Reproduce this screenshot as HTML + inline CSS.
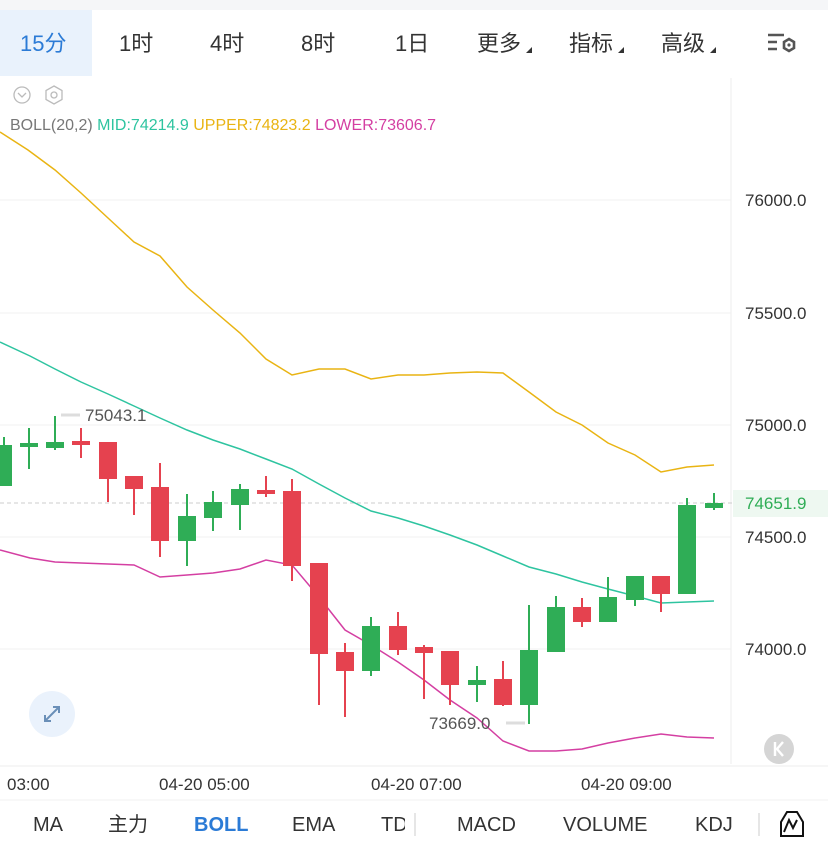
<!DOCTYPE html>
<html><head><meta charset="utf-8"><style>
body{margin:0;width:828px;height:850px;overflow:hidden;background:#fff;font-family:"Liberation Sans","Noto Sans CJK SC",sans-serif;position:relative}
div{line-height:1}
.t{position:absolute;white-space:nowrap}
.tab{position:absolute;top:32px;font-size:22px;color:#333;line-height:24px;height:24px}
.bt{position:absolute;top:814px;font-size:20px;color:#333;line-height:22px;height:22px}
.ax{position:absolute;left:745px;font-size:17px;color:#333}
</style></head><body>
<div style="position:absolute;left:0;top:0;width:828px;height:10px;background:#f5f6f8"></div>
<div style="position:absolute;left:0;top:10px;width:92px;height:66px;background:#e9f2fc"></div>
<div class="tab" style="left:20px;color:#2b7bd6">15分</div>
<div class="tab" style="left:119px">1时</div>
<div class="tab" style="left:210px">4时</div>
<div class="tab" style="left:301px">8时</div>
<div class="tab" style="left:395px">1日</div>
<div class="tab" style="left:477px">更多</div>
<div class="tab" style="left:569px">指标</div>
<div class="tab" style="left:661px">高级</div>
<svg style="position:absolute;left:0;top:0" width="828" height="850">
<g fill="#333"><path d="M526 53l6-6v6z"/><path d="M618 53l6-6v6z"/><path d="M710 53l6-6v6z"/></g>
<g stroke="#555" stroke-width="2.6" fill="none"><path d="M768 35h16M768 42h9M768 49h9"/><path d="M789 39l5 3v6l-5 3-5-3v-6z"/></g>
<circle cx="789" cy="45" r="1.6" fill="#555"/>
<line x1="731" y1="78" x2="731" y2="764" stroke="#eee"/>
<circle cx="22" cy="95" r="8" fill="none" stroke="#bbb" stroke-width="1.3"/><path d="M18 93l4 4 4-4" stroke="#bbb" fill="none" stroke-width="1.3"/>
<path d="M54 86l8 4.5v9l-8 4.5-8-4.5v-9z" fill="none" stroke="#bbb" stroke-width="1.3"/><circle cx="54" cy="95" r="3" fill="none" stroke="#bbb" stroke-width="1.3"/>
<g stroke="#f0f0f0"><line x1="0" y1="200" x2="731" y2="200"/><line x1="0" y1="313" x2="731" y2="313"/><line x1="0" y1="425" x2="731" y2="425"/><line x1="0" y1="537" x2="731" y2="537"/><line x1="0" y1="649" x2="731" y2="649"/></g>
<line x1="0" y1="503" x2="828" y2="503" stroke="#ccc" stroke-dasharray="4,3"/>
<rect x="733" y="490" width="95" height="27" fill="#eef8f1"/>
<polyline fill="none" stroke="#e9b413" stroke-width="1.5" points="0,132 28,150 55,170 81,193 108,218 134,242 160,256 187,287 213,310 240,333 266,359 292,375 319,369 345,369 371,379 398,375 424,375 450,373 477,372 503,373 529,392 556,412 582,425 608,443 635,455 661,472 687,467 714,465"/>
<polyline fill="none" stroke="#2ec4a0" stroke-width="1.5" points="0,342 30,356 55,369 81,382 108,394 134,406 160,418 187,430 213,440 240,449 266,459 292,469 319,484 345,498 371,511 398,518 424,526 450,535 477,545 503,556 529,567 556,574 582,582 608,589 635,596 661,603 687,602 714,601"/>
<polyline fill="none" stroke="#d43fa2" stroke-width="1.5" points="0,550 30,558 55,562 81,563 108,564 134,565 160,577 187,575 213,573 240,569 266,560 292,565 319,597 345,630 371,645 398,662 424,680 450,700 477,718 503,741 529,751 556,751 582,749 608,743 635,738 661,734 687,737 714,738"/>
<g stroke-width="2">
<g fill="#2fad56" stroke="#2fad56">
<line x1="4" y1="437" x2="4" y2="485"/><rect x="0" y="446" width="11" height="39"/>
<line x1="29" y1="428" x2="29" y2="469"/><rect x="21" y="444" width="16" height="2"/>
<line x1="55" y1="416" x2="55" y2="450"/><rect x="47" y="443" width="16" height="4"/>
<line x1="187" y1="494" x2="187" y2="566"/><rect x="179" y="517" width="16" height="23"/>
<line x1="213" y1="491" x2="213" y2="531"/><rect x="205" y="503" width="16" height="14"/>
<line x1="240" y1="484" x2="240" y2="530"/><rect x="232" y="490" width="16" height="14"/>
<line x1="371" y1="617" x2="371" y2="676"/><rect x="363" y="627" width="16" height="43"/>
<line x1="477" y1="666" x2="477" y2="702"/><rect x="469" y="681" width="16" height="3"/>
<line x1="529" y1="605" x2="529" y2="724"/><rect x="521" y="651" width="16" height="53"/>
<line x1="556" y1="596" x2="556" y2="651"/><rect x="548" y="608" width="16" height="43"/>
<line x1="608" y1="577" x2="608" y2="622"/><rect x="600" y="598" width="16" height="23"/>
<line x1="635" y1="577" x2="635" y2="606"/><rect x="627" y="577" width="16" height="22"/>
<line x1="687" y1="498" x2="687" y2="593"/><rect x="679" y="506" width="16" height="87"/>
<line x1="714" y1="493" x2="714" y2="510"/><rect x="706" y="504" width="16" height="3"/>
</g>
<g fill="#e5424f" stroke="#e5424f">
<line x1="81" y1="428" x2="81" y2="458"/><rect x="73" y="442" width="16" height="2"/>
<line x1="108" y1="443" x2="108" y2="502"/><rect x="100" y="443" width="16" height="35"/>
<line x1="134" y1="477" x2="134" y2="515"/><rect x="126" y="477" width="16" height="11"/>
<line x1="160" y1="463" x2="160" y2="557"/><rect x="152" y="488" width="16" height="52"/>
<line x1="266" y1="476" x2="266" y2="497"/><rect x="258" y="491" width="16" height="2"/>
<line x1="292" y1="479" x2="292" y2="581"/><rect x="284" y="492" width="16" height="73"/>
<line x1="319" y1="564" x2="319" y2="705"/><rect x="311" y="564" width="16" height="89"/>
<line x1="345" y1="643" x2="345" y2="717"/><rect x="337" y="653" width="16" height="17"/>
<line x1="398" y1="612" x2="398" y2="655"/><rect x="390" y="627" width="16" height="22"/>
<line x1="424" y1="645" x2="424" y2="699"/><rect x="416" y="648" width="16" height="4"/>
<line x1="450" y1="652" x2="450" y2="705"/><rect x="442" y="652" width="16" height="32"/>
<line x1="503" y1="661" x2="503" y2="706"/><rect x="495" y="680" width="16" height="24"/>
<line x1="582" y1="598" x2="582" y2="627"/><rect x="574" y="608" width="16" height="13"/>
<line x1="661" y1="576" x2="661" y2="612"/><rect x="653" y="577" width="16" height="16"/>
</g></g>
<line x1="61" y1="415" x2="80" y2="415" stroke="#ddd" stroke-width="3"/>
<line x1="506" y1="723" x2="525" y2="723" stroke="#ddd" stroke-width="3"/>
<circle cx="52" cy="714" r="23" fill="#eaf2fc"/>
<g stroke="#6a8fb8" stroke-width="2" fill="none"><path d="M45 721l14-14M53 707h6v6M45 715v6h6"/></g>
<circle cx="779" cy="749" r="15" fill="#d5d5d5"/><path d="M775 742v14M783 742l-6 7 6 7" stroke="#fff" stroke-width="2.4" fill="none"/>
<line x1="0" y1="766" x2="828" y2="766" stroke="#eee"/>
<line x1="0" y1="800" x2="828" y2="800" stroke="#f2f2f2"/>
<line x1="415" y1="813" x2="415" y2="836" stroke="#ccc"/>
<line x1="759" y1="813" x2="759" y2="836" stroke="#ccc"/>
<path d="M787 812l-6 10v14h22v-14l-6-10z M784 832l5-12 4 8 4-8" fill="none" stroke="#111" stroke-width="2"/>
</svg>
<div class="t" style="left:10px;top:118px;font-size:16px;color:#777">BOLL(20,2) <span style="color:#2ec4a0">MID:74214.9</span> <span style="color:#e9b413">UPPER:74823.2</span> <span style="color:#d43fa2">LOWER:73606.7</span></div>
<div class="ax" style="top:192px">76000.0</div>
<div class="ax" style="top:305px">75500.0</div>
<div class="ax" style="top:417px">75000.0</div>
<div class="ax" style="top:495px;color:#2fad56">74651.9</div>
<div class="ax" style="top:529px">74500.0</div>
<div class="ax" style="top:641px">74000.0</div>
<div class="t" style="left:85px;top:407px;font-size:17px;color:#555">75043.1</div>
<div class="t" style="left:429px;top:715px;font-size:17px;color:#555">73669.0</div>
<div class="t" style="left:7px;top:776px;font-size:17px;color:#333">03:00</div>
<div class="t" style="left:159px;top:776px;font-size:17px;color:#333">04-20 05:00</div>
<div class="t" style="left:371px;top:776px;font-size:17px;color:#333">04-20 07:00</div>
<div class="t" style="left:581px;top:776px;font-size:17px;color:#333">04-20 09:00</div>
<div class="bt" style="left:33px">MA</div>
<div class="bt" style="left:108px">主力</div>
<div class="bt" style="left:194px;color:#2b7bd6;font-weight:bold">BOLL</div>
<div class="bt" style="left:292px">EMA</div>
<div class="bt" style="left:381px;width:24px;overflow:hidden">TD</div>
<div class="bt" style="left:457px">MACD</div>
<div class="bt" style="left:563px">VOLUME</div>
<div class="bt" style="left:695px">KDJ</div>
</body></html>
